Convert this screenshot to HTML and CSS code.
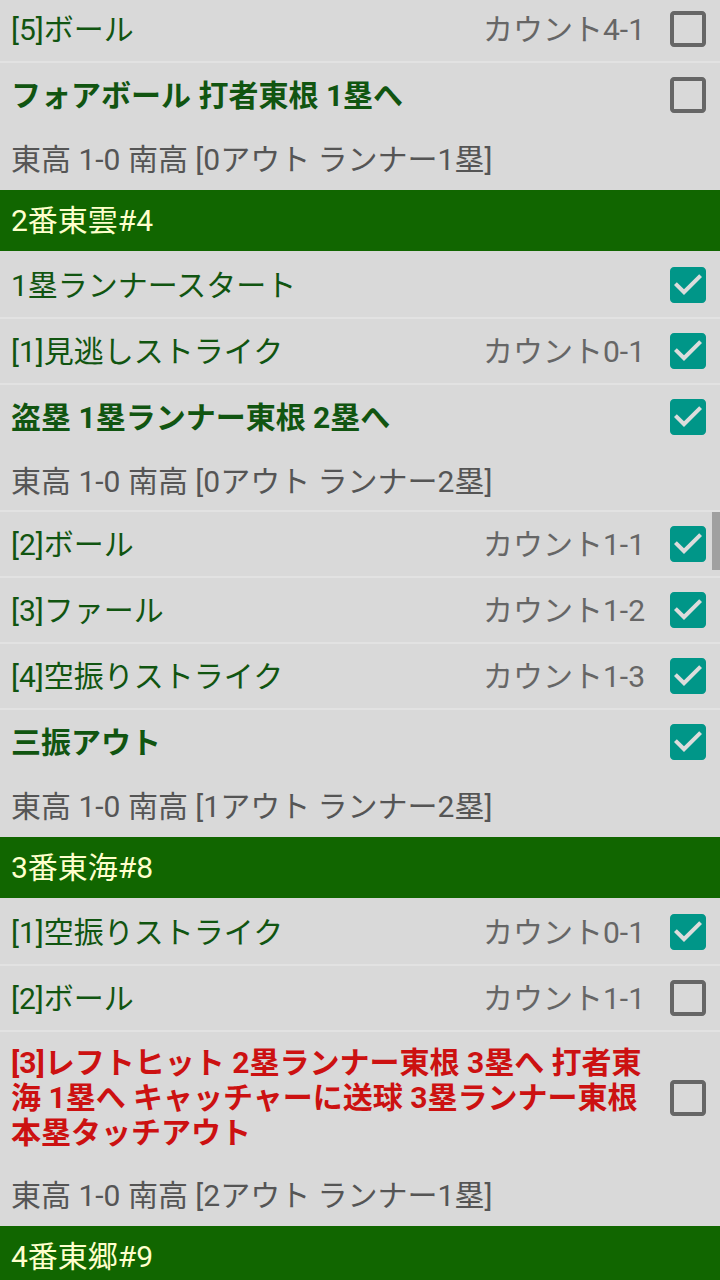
FILE: index.html
```html
<!DOCTYPE html>
<html lang="ja">
<head>
<meta charset="utf-8">
<title>速報</title>
<link rel="stylesheet" href="styles.css">
</head>
<body>
<div class="list">
  <div class="group first">
    <div class="row"><span class="label">[5]ボール</span><span class="count">カウント4-1</span><svg class="cb" viewBox="3 3 18 18"><path class="cb-off" d="M19 5v14H5V5h14m0-2H5c-1.1 0-2 .9-2 2v14c0 1.1.9 2 2 2h14c1.1 0 2-.9 2-2V5c0-1.1-.9-2-2-2z"/></svg></div>
    <div class="row"><span class="label bold">フォアボール 打者東根 1塁へ</span><svg class="cb" viewBox="3 3 18 18"><path class="cb-off" d="M19 5v14H5V5h14m0-2H5c-1.1 0-2 .9-2 2v14c0 1.1.9 2 2 2h14c1.1 0 2-.9 2-2V5c0-1.1-.9-2-2-2z"/></svg></div>
    <div class="score">東高 1-0 南高 [0アウト ランナー1塁]</div>
  </div>
  <div class="header">2番東雲#4</div>
  <div class="group">
    <div class="row"><span class="label">1塁ランナースタート</span><svg class="cb" viewBox="3 3 18 18"><path class="cb-box" d="M19 3H5c-1.11 0-2 .9-2 2v14c0 1.1.89 2 2 2h14c1.11 0 2-.9 2-2V5c0-1.1-.89-2-2-2z"/><path class="cb-mark" d="M10 17l-5-5 1.41-1.41L10 14.17l7.59-7.59L19 8l-9 9z"/></svg></div>
    <div class="row"><span class="label">[1]見逃しストライク</span><span class="count">カウント0-1</span><svg class="cb" viewBox="3 3 18 18"><path class="cb-box" d="M19 3H5c-1.11 0-2 .9-2 2v14c0 1.1.89 2 2 2h14c1.11 0 2-.9 2-2V5c0-1.1-.89-2-2-2z"/><path class="cb-mark" d="M10 17l-5-5 1.41-1.41L10 14.17l7.59-7.59L19 8l-9 9z"/></svg></div>
    <div class="row"><span class="label bold">盗塁 1塁ランナー東根 2塁へ</span><svg class="cb" viewBox="3 3 18 18"><path class="cb-box" d="M19 3H5c-1.11 0-2 .9-2 2v14c0 1.1.89 2 2 2h14c1.11 0 2-.9 2-2V5c0-1.1-.89-2-2-2z"/><path class="cb-mark" d="M10 17l-5-5 1.41-1.41L10 14.17l7.59-7.59L19 8l-9 9z"/></svg></div>
    <div class="score">東高 1-0 南高 [0アウト ランナー2塁]</div>
    <div class="row"><span class="label">[2]ボール</span><span class="count">カウント1-1</span><svg class="cb" viewBox="3 3 18 18"><path class="cb-box" d="M19 3H5c-1.11 0-2 .9-2 2v14c0 1.1.89 2 2 2h14c1.11 0 2-.9 2-2V5c0-1.1-.89-2-2-2z"/><path class="cb-mark" d="M10 17l-5-5 1.41-1.41L10 14.17l7.59-7.59L19 8l-9 9z"/></svg></div>
    <div class="row"><span class="label">[3]ファール</span><span class="count">カウント1-2</span><svg class="cb" viewBox="3 3 18 18"><path class="cb-box" d="M19 3H5c-1.11 0-2 .9-2 2v14c0 1.1.89 2 2 2h14c1.11 0 2-.9 2-2V5c0-1.1-.89-2-2-2z"/><path class="cb-mark" d="M10 17l-5-5 1.41-1.41L10 14.17l7.59-7.59L19 8l-9 9z"/></svg></div>
    <div class="row"><span class="label">[4]空振りストライク</span><span class="count">カウント1-3</span><svg class="cb" viewBox="3 3 18 18"><path class="cb-box" d="M19 3H5c-1.11 0-2 .9-2 2v14c0 1.1.89 2 2 2h14c1.11 0 2-.9 2-2V5c0-1.1-.89-2-2-2z"/><path class="cb-mark" d="M10 17l-5-5 1.41-1.41L10 14.17l7.59-7.59L19 8l-9 9z"/></svg></div>
    <div class="row"><span class="label bold">三振アウト</span><svg class="cb" viewBox="3 3 18 18"><path class="cb-box" d="M19 3H5c-1.11 0-2 .9-2 2v14c0 1.1.89 2 2 2h14c1.11 0 2-.9 2-2V5c0-1.1-.89-2-2-2z"/><path class="cb-mark" d="M10 17l-5-5 1.41-1.41L10 14.17l7.59-7.59L19 8l-9 9z"/></svg></div>
    <div class="score">東高 1-0 南高 [1アウト ランナー2塁]</div>
  </div>
  <div class="header">3番東海#8</div>
  <div class="group">
    <div class="row"><span class="label">[1]空振りストライク</span><span class="count">カウント0-1</span><svg class="cb" viewBox="3 3 18 18"><path class="cb-box" d="M19 3H5c-1.11 0-2 .9-2 2v14c0 1.1.89 2 2 2h14c1.11 0 2-.9 2-2V5c0-1.1-.89-2-2-2z"/><path class="cb-mark" d="M10 17l-5-5 1.41-1.41L10 14.17l7.59-7.59L19 8l-9 9z"/></svg></div>
    <div class="row"><span class="label">[2]ボール</span><span class="count">カウント1-1</span><svg class="cb" viewBox="3 3 18 18"><path class="cb-off" d="M19 5v14H5V5h14m0-2H5c-1.1 0-2 .9-2 2v14c0 1.1.9 2 2 2h14c1.1 0 2-.9 2-2V5c0-1.1-.9-2-2-2z"/></svg></div>
    <div class="row tall"><span class="label bold red">[3]レフトヒット 2塁ランナー東根 3塁へ 打者東海 1塁へ キャッチャーに送球 3塁ランナー東根本塁タッチアウト</span><svg class="cb" viewBox="3 3 18 18"><path class="cb-off" d="M19 5v14H5V5h14m0-2H5c-1.1 0-2 .9-2 2v14c0 1.1.9 2 2 2h14c1.1 0 2-.9 2-2V5c0-1.1-.9-2-2-2z"/></svg></div>
    <div class="score">東高 1-0 南高 [2アウト ランナー1塁]</div>
  </div>
  <div class="header">4番東郷#9</div>
</div>
<div class="scrollbar"></div>
</body>
</html>
```

FILE: styles.css
```css
html {
  background: #d9d9d9;
}
body {
  margin: 0;
  background: #d9d9d9;
  font-family: Roboto, "Noto Sans CJK JP", sans-serif;
  font-size: 30px;
  overflow: hidden;
}
.list {
  margin-top: -3px;
  display: flex;
  flex-direction: column;
}
.group {
  display: flex;
  flex-direction: column;
  padding-top: 2px;
}
.group.first {
  padding-top: 0;
}
.header {
  height: 61px;
  background: #116600;
  color: #ffffcc;
  display: flex;
  align-items: center;
  padding-left: 11px;
  line-height: 1;
}
.row {
  display: flex;
  align-items: center;
  min-height: 64px;
  box-sizing: border-box;
  padding: 0 14px 0 11px;
  color: #115511;
}
.row + .row,
.score + .row {
  border-top: 2px solid #e2e2e2;
  min-height: 66px;
}
.row.tall {
  padding-top: 13px;
  padding-bottom: 13px;
}
.label {
  flex: 1;
  min-width: 0;
  line-height: 35px;
}
.bold {
  font-weight: bold;
}
.red {
  color: #cc1111;
}
.count {
  color: #666666;
  margin-right: 10px;
  line-height: 35px;
}
.cb {
  width: 36px;
  height: 36px;
  flex: none;
  margin-left: 15px;
}
.cb-off {
  fill: #666666;
}
.cb-box {
  fill: #009688;
}
.cb-mark {
  fill: #dcdcdc;
}
.score {
  height: 63px;
  box-sizing: border-box;
  display: flex;
  align-items: center;
  padding: 0 0 4px 11px;
  color: #555555;
}
.score:not(:last-child) {
  height: 61px;
  padding-bottom: 2px;
}
.scrollbar {
  position: fixed;
  right: 0;
  top: 512px;
  width: 8px;
  height: 58px;
  background: #a0a0a0;
}
```
